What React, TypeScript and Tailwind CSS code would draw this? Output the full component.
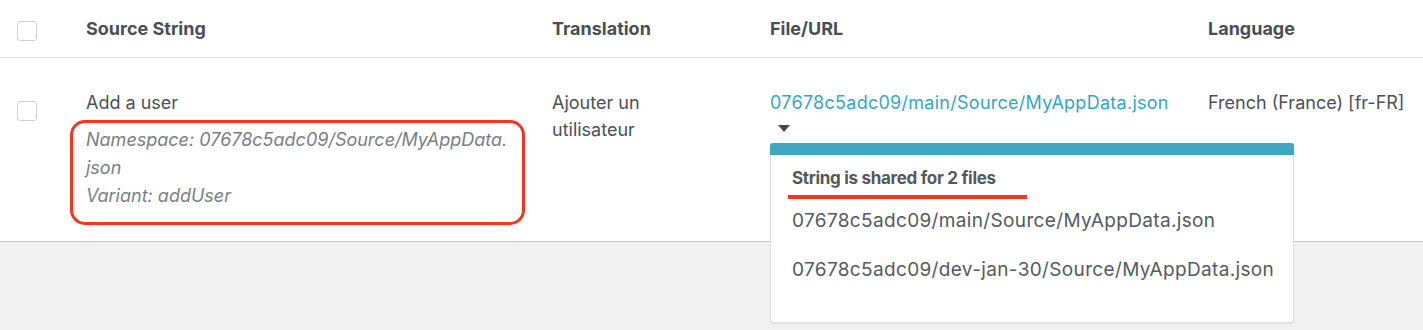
import React from 'react';

function Checkbox() {
    return <div className="w-[20px] h-[20px] rounded-[3px] border border-[#cfd1d2] bg-white" />;
}

function SharedFilesPopup() {
    return (
        <div className="absolute left-0 top-[85px] w-[524px] h-[180px] flex flex-col z-10">
            <div className="h-[12px] bg-[#3ea6c0] rounded-t-[3px]" />
            <div className="flex-1 bg-white border-x border-b border-[#dcdddd] rounded-b-[3px] shadow-[0_1px_2px_rgba(0,0,0,0.06)] pl-[21px] pt-[11px]">
                <div className="text-[17px] leading-[24px] font-bold tracking-[-0.3px] text-[#54595c]">
                    String is shared for 2 files
                </div>
                <div className="mt-[5px] -ml-[4px] w-[239px] h-[4px] bg-[#f2361f]" />
                <div className="mt-[10px] flex flex-col gap-[25px] text-[19px] leading-[24px] tracking-[0.35px] text-[#555a5e]">
                    <div>07678c5adc09/main/Source/MyAppData.json</div>
                    <div>07678c5adc09/dev-jan-30/Source/MyAppData.json</div>
                </div>
            </div>
        </div>
    );
}

export default function App() {
    return (
        <div className="w-[1423px] h-[330px] bg-[#f1f1f1] font-['Inter',sans-serif] text-[#4b5155] overflow-hidden">
            <div className="bg-white">
                {/* header */}
                <div className="grid grid-cols-[86px_466px_218px_438px_1fr] h-[58px] border-b border-[#e3e3e3] items-center text-[18px] font-bold text-[#4a4f52]">
                    <div className="pl-[17px] pt-[4px]"><Checkbox /></div>
                    <div>Source String</div>
                    <div>Translation</div>
                    <div>File/URL</div>
                    <div>Language</div>
                </div>

                {/* row */}
                <div className="grid grid-cols-[86px_466px_218px_438px_1fr] h-[184px] border-b border-[#c6c6c6] text-[18px] leading-[27px]">
                    <div className="pl-[17px] pt-[43px]"><Checkbox /></div>
                    <div className="pt-[31px]">
                        <div>Add a user</div>
                        <div className="mt-[4px] -ml-[16px] w-[455px] border-[3px] border-[#f2361f] rounded-[15px] pl-[13px] pt-[3px] pb-[12px] italic text-[#7a7f83] leading-[28px]">
                            <div>Namespace: 07678c5adc09/Source/MyAppData.</div>
                            <div>json</div>
                            <div>Variant: addUser</div>
                        </div>
                    </div>
                    <div className="pt-[31px]">
                        <div>Ajouter un</div>
                        <div>utilisateur</div>
                    </div>
                    <div className="pt-[31px] relative">
                        <a className="text-[#3aa5bf] tracking-[0.27px]">07678c5adc09/main/Source/MyAppData.json</a>
                        <svg width="12" height="7" viewBox="0 0 12 7" className="ml-[8px] mt-[9px] block">
                            <path d="M0 0 H12 L6 7 Z" fill="#45494c" />
                        </svg>
                        <SharedFilesPopup />
                    </div>
                    <div className="pt-[31px]">French (France) [fr-FR]</div>
                </div>
            </div>
        </div>
    );
}
